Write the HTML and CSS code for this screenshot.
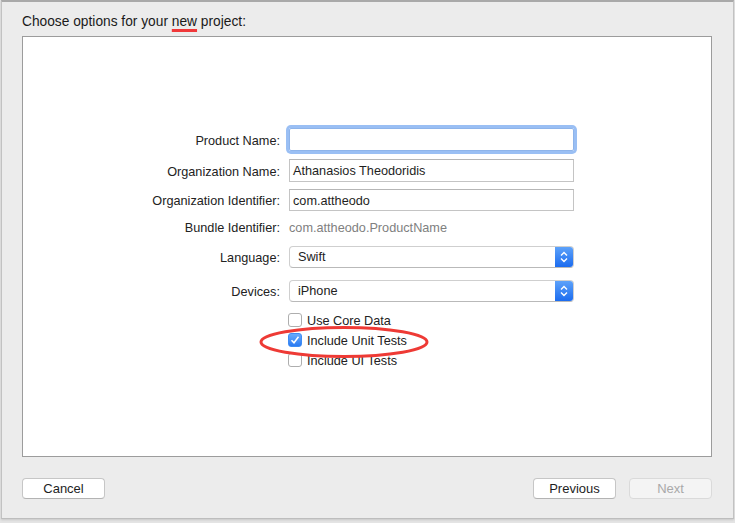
FILE: index.html
```html
<!DOCTYPE html>
<html>
<head>
<meta charset="utf-8">
<link rel="stylesheet" href="styles.css">
</head>
<body>
<div class="window">
  <div class="title">Choose options for your <span class="spell">new</span> project:</div>
  <div class="panel">
    <div class="form">
      <div class="row r1">
        <div class="label">Product Name:</div>
        <div class="field focus"></div>
      </div>
      <div class="row r2">
        <div class="label">Organization Name:</div>
        <div class="field">Athanasios Theodoridis</div>
      </div>
      <div class="row r3">
        <div class="label">Organization Identifier:</div>
        <div class="field">com.attheodo</div>
      </div>
      <div class="row r4">
        <div class="label">Bundle Identifier:</div>
        <div class="static">com.attheodo.ProductName</div>
      </div>
      <div class="row r5">
        <div class="label">Language:</div>
        <div class="popup"><span class="ptext">Swift</span><span class="arrows"><svg width="18" height="22" viewBox="0 0 18 22"><path d="M6 9.5 L9 6.5 L12 9.5 M6 12.5 L9 15.5 L12 12.5" fill="none" stroke="#fff" stroke-width="1.4"/></svg></span></div>
      </div>
      <div class="row r6">
        <div class="label">Devices:</div>
        <div class="popup"><span class="ptext">iPhone</span><span class="arrows"><svg width="18" height="22" viewBox="0 0 18 22"><path d="M6 9.5 L9 6.5 L12 9.5 M6 12.5 L9 15.5 L12 12.5" fill="none" stroke="#fff" stroke-width="1.4"/></svg></span></div>
      </div>
      <div class="checks">
        <div class="check"><span class="box"></span><span class="ctext">Use Core Data</span></div>
        <div class="check"><span class="box on"><svg width="14" height="14" viewBox="0 0 14 14"><path d="M3.5 7.2 L6 9.8 L10.5 3.8" fill="none" stroke="#fff" stroke-width="1.5"/></svg></span><span class="ctext">Include Unit Tests</span></div>
        <div class="check"><span class="box"></span><span class="ctext">Include UI Tests</span></div>
        <svg class="ellipse" width="174" height="36" viewBox="0 0 174 36"><ellipse cx="87" cy="18" rx="83" ry="14.5" fill="none" stroke="#ee3a35" stroke-width="3"/></svg>
      </div>
    </div>
  </div>
  <div class="buttons">
    <div class="btn">Cancel</div>
    <div class="right">
      <div class="btn">Previous</div>
      <div class="btn disabled">Next</div>
    </div>
  </div>
</div>
</body>
</html>
```
FILE: styles.css
```css
html, body {
  margin: 0;
  padding: 0;
}
body {
  width: 735px;
  height: 523px;
  background: #e4e4e4;
  font-family: "Liberation Sans", Arial, sans-serif;
  font-size: 12.7px;
  color: #222;
  overflow: hidden;
}
.window {
  margin: 0 1px 0 1px;
  height: 519px;
  background: #ececec;
  border-top: 2px solid #a9a9a9;
  border-left: 1px solid #c2c2c2;
  border-right: 1px solid #c2c2c2;
  border-bottom: 1px solid #bdbdbd;
  box-shadow: 0 1px 2px rgba(0,0,0,0.12);
  box-sizing: border-box;
  display: flex;
  flex-direction: column;
}
.title {
  padding: 12px 0 0 20px;
  height: 22px;
  line-height: 16px;
  font-size: 13.75px;
  color: #1a1a1a;
}
.spell {
  text-decoration: underline;
  text-decoration-color: #f0383a;
  text-decoration-thickness: 3px;
  text-underline-offset: 3px;
}
.panel {
  margin: 0 21px 0 20px;
  height: 421px;
  box-sizing: border-box;
  background: #fff;
  border: 1px solid #9c9c9c;
}
.form {
  padding-top: 91px;
  display: flex;
  flex-direction: column;
}
.row {
  display: flex;
  align-items: center;
  gap: 9px;
}
.label {
  width: 257px;
  text-align: right;
  flex: none;
  padding-top: 2px;
}
.r1 { height: 23px; }
.r2 { height: 23px; margin-top: 8px; }
.r3 { height: 22px; margin-top: 7px; }
.r4 { height: 20px; margin-top: 6px; }
.r5 { height: 22px; margin-top: 9px; }
.r6 { height: 22px; margin-top: 12px; }
.field {
  width: 285px;
  height: 100%;
  box-sizing: border-box;
  border: 1px solid #c4c4c4;
  border-top-color: #b6b6b6;
  padding: 1px 0 0 3px;
  line-height: 21px;
  color: #1e1e1e;
}
.field.focus {
  border-color: #8eb4ea;
  border-radius: 2px;
  box-shadow: 0 0 0 3px rgba(120, 170, 240, 0.75);
}
.static {
  color: #808080;
  padding-top: 2px;
}
.popup {
  width: 285px;
  height: 100%;
  box-sizing: border-box;
  border: 1px solid #cfcfcf;
  border-bottom-color: #b9b9b9;
  border-radius: 4px;
  display: flex;
  align-items: center;
  justify-content: space-between;
  overflow: hidden;
  background: #fff;
}
.ptext {
  padding-left: 8px;
}
.arrows {
  width: 18px;
  height: 100%;
  background: linear-gradient(#5da2fa, #1c6cef);
  display: flex;
  align-items: center;
  justify-content: center;
}
.arrows svg {
  display: block;
}
.checks {
  margin-top: 8px;
  padding-left: 265px;
  position: relative;
}
.check {
  height: 20px;
  display: flex;
  align-items: center;
  gap: 5px;
}
.ctext {
  padding-top: 2px;
}
.box {
  width: 12px;
  height: 12px;
  border: 1px solid #aeaeae;
  border-radius: 3px;
  background: #fff;
  display: inline-block;
  flex: none;
  position: relative;
}
.box.on {
  border-color: #3e8cf4;
  background: linear-gradient(#69abfc, #2a7af2);
}
.box.on svg {
  position: absolute;
  left: -1px;
  top: -1px;
}
.ellipse {
  position: absolute;
  left: 234px;
  top: 14px;
}
.buttons {
  display: flex;
  justify-content: space-between;
  padding: 21px 21px 0 20px;
}
.right {
  display: flex;
  gap: 13px;
}
.btn {
  width: 83px;
  height: 21px;
  box-sizing: border-box;
  border: 1px solid #c6c6c6;
  border-bottom-color: #b3b3b3;
  border-radius: 4px;
  background: #fff;
  text-align: center;
  line-height: 20px;
  font-size: 13px;
  color: #1e1e1e;
}
.btn.disabled {
  background: #f4f4f4;
  border-color: #dadada;
  color: #a9a9a9;
}
```
